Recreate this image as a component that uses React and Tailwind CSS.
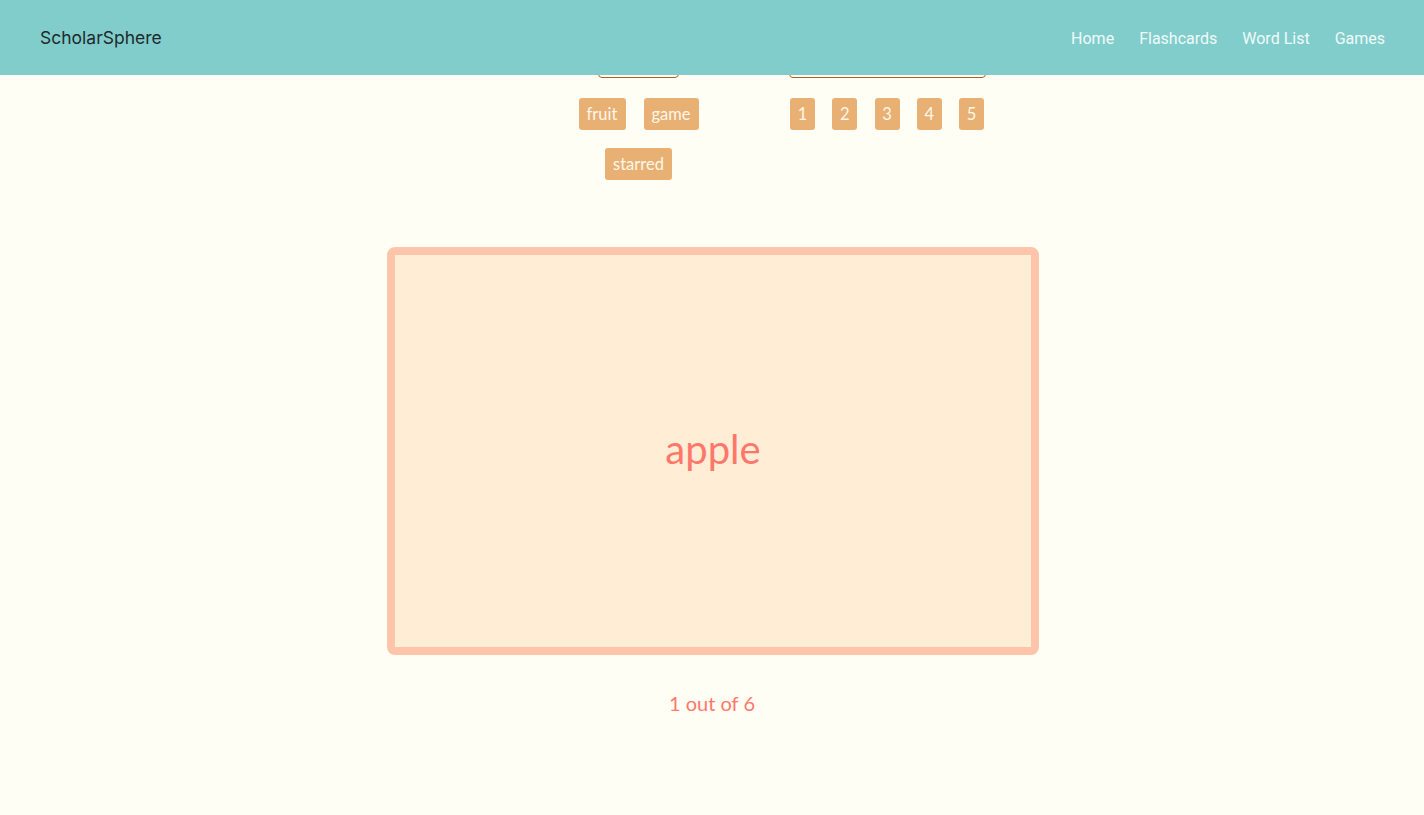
import React from "react";

const Tag = ({ children, className = "" }) => (
  <span
    className={`h-8 flex items-center justify-center rounded-[3px] bg-[#E9B073] text-[#FFF7EA] text-[16.5px] leading-none ${className}`}
  >
    {children}
  </span>
);

export default function App() {
  return (
    <div
      className="relative min-h-[815px] bg-[#FFFEF4]"
      style={{ fontFamily: '"Trebuchet MS", Lato, "DejaVu Sans", sans-serif' }}
    >
      <header className="absolute top-0 left-0 right-0 h-[75px] bg-[#81CDCB] flex items-center justify-between pl-[40px] pr-[39px] pt-[2px] z-10">
        <span
          className="text-[17.5px] text-[#1E2A2C]"
          style={{ fontFamily: 'Inter, "Liberation Sans", sans-serif' }}
        >
          ScholarSphere
        </span>
        <nav
          className="flex gap-[25px] text-[16px] text-[#F0FAF9]"
          style={{ fontFamily: 'Roboto, "Liberation Sans", sans-serif' }}
        >
          <span>Home</span>
          <span>Flashcards</span>
          <span>Word List</span>
          <span>Games</span>
        </nav>
      </header>

      <main className="pt-[40px]">
        <div className="flex pl-[568px] gap-[80px]">
          <div className="w-[141px] flex flex-col items-center gap-[20px]">
            <div className="w-[81px] h-[38px] border border-[#B0621C] rounded-[4px] bg-[#FFFEF4]" />
            <div className="flex flex-wrap justify-center gap-x-[18px] gap-y-[18px]">
              <Tag className="w-[47px]">fruit</Tag>
              <Tag className="w-[55px]">game</Tag>
              <Tag className="w-[67px]">starred</Tag>
            </div>
          </div>
          <div className="w-[197px] flex flex-col items-center gap-[20px]">
            <div className="w-[197px] h-[38px] border border-[#B0621C] rounded-[4px] bg-[#FFFEF4]" />
            <div className="flex justify-between w-[197px] pl-[1px] pr-[2px]">
              <Tag className="w-[25px]">1</Tag>
              <Tag className="w-[25px]">2</Tag>
              <Tag className="w-[25px]">3</Tag>
              <Tag className="w-[25px]">4</Tag>
              <Tag className="w-[25px]">5</Tag>
            </div>
          </div>
        </div>

        <div className="flex justify-center mt-[67px] pl-[2px]">
          <div className="w-[652px] h-[408px] rounded-[8px] border-[8px] border-[#FEC5AA] bg-[#FFEDD6] flex items-center justify-center">
            <span className="text-[40px] text-[#FF776A] leading-none -mt-[4px]">apple</span>
          </div>
        </div>

        <div className="flex justify-center mt-[33px]">
          <span className="text-[20px] text-[#FF776A]">1 out of 6</span>
        </div>
      </main>
    </div>
  );
}
